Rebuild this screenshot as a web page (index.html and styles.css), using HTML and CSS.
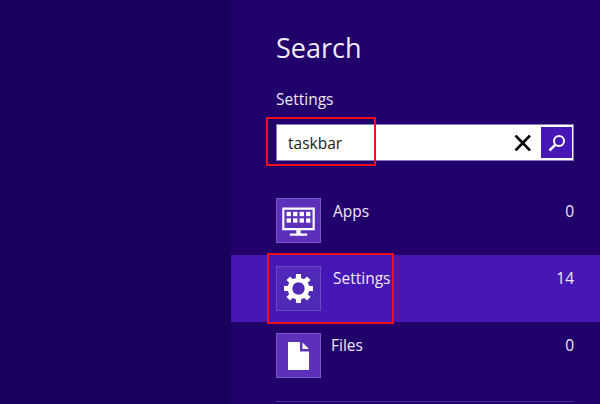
FILE: index.html
```html
<!DOCTYPE html>
<html lang="en">
<head>
<meta charset="utf-8">
<title>Search</title>
<link rel="stylesheet" href="styles.css">
</head>
<body>
<div class="screen">
  <div class="backdrop"></div>
  <main class="pane">
    <header class="head">
      <h1 class="title">Search</h1>
      <div class="scope">Settings</div>
      <div class="searchbox">
        <span class="query">taskbar</span>
        <svg class="clear" width="18" height="16" viewBox="0 0 18 16"><path d="M1.500 0.500 L16 15.500 M16 0.500 L1.500 15.500" stroke="#000" stroke-width="2.6" fill="none"/></svg>
        <span class="go">
          <svg width="20" height="20" viewBox="0 0 20 20"><circle cx="12" cy="8" r="5" stroke="#fff" stroke-width="2" fill="none"/><path d="M8.2 11.8 L2.500 17.500" stroke="#fff" stroke-width="2.6" fill="none"/></svg>
        </span>
      </div>
    </header>
    <ul class="list">
      <li class="row">
        <span class="tile">
          <svg width="39" height="39" viewBox="0 -2 36 36"><path fill="#fff" fill-rule="evenodd" d="M3 4h30v21H20v3h6v2H10v-2h6v-3H3zM5 6v17h26V6z"/><g fill="#fff"><rect x="7" y="8" width="4" height="4"/><rect x="13" y="8" width="4" height="4"/><rect x="19" y="8" width="4" height="4"/><rect x="25" y="8" width="4" height="4"/><rect x="7" y="14" width="4" height="4"/><rect x="13" y="14" width="4" height="4"/><rect x="19" y="14" width="4" height="4"/><rect x="25" y="14" width="4" height="4"/></g></svg>
        </span>
        <span class="label">Apps</span>
        <span class="count">0</span>
      </li>
      <li class="row selected">
        <span class="tile">
          <svg width="33" height="33" viewBox="0 0 32 32"><g fill="#fff"><path fill-rule="evenodd" d="M16 5.5a10.500 10.500 0 1 0 0 21a10.500 10.500 0 1 0 0-21zM16 10a6 6 0 1 1 0 12a6 6 0 1 1 0-12z"/><rect x="13.500" y="2" width="5" height="5"/><rect x="13.500" y="25" width="5" height="5"/><rect x="2" y="13.500" width="5" height="5"/><rect x="25" y="13.500" width="5" height="5"/><rect x="13.500" y="2" width="5" height="5" transform="rotate(45 16 16)"/><rect x="13.500" y="25" width="5" height="5" transform="rotate(45 16 16)"/><rect x="2" y="13.500" width="5" height="5" transform="rotate(45 16 16)"/><rect x="25" y="13.500" width="5" height="5" transform="rotate(45 16 16)"/></g></svg>
        </span>
        <span class="label">Settings</span>
        <span class="count">14</span>
      </li>
      <li class="row">
        <span class="tile">
          <svg width="21" height="28" viewBox="0 0 21 28"><path fill="#fff" d="M0 0h12v9.500h9V28H0z"/><path fill="#fff" d="M14.500 0.500l6.500 6.500h-6.500z"/></svg>
        </span>
        <span class="label">Files</span>
        <span class="count">0</span>
      </li>
    </ul>
    <div class="rule"></div>
  </main>
  <div class="mark mark-query"></div>
  <div class="mark mark-settings"></div>
</div>
</body>
</html>
```
FILE: styles.css
```css
* { box-sizing: border-box; }
html, body { margin: 0; padding: 0; }
body { width: 600px; height: 404px; overflow: hidden; font-family: "Open Sans", "Noto Sans", sans-serif; color: #fff; }
.screen { position: relative; display: flex; width: 600px; height: 404px; background: #22006b; overflow: hidden; }
.backdrop { width: 231px; background: #18005c; }
.pane { flex: 1; display: flex; flex-direction: column; }
.head { padding: 29px 26px 0 45px; }
.title { margin: 0; font-size: 27px; line-height: 37px; font-weight: 400; color: #f0ecf8; }
.scope { margin-top: 23px; font-size: 15.500px; line-height: 20px; color: #eae6f4; }
.searchbox { display: flex; align-items: center; height: 37px; margin-top: 15px; padding: 0 1px 0 11px; background: #fff; border: 1px solid #8a78c0; }
.query { flex: 1; font-size: 15.500px; color: #1a1a1a; }
.clear { margin-right: 9px; }
.go { display: flex; align-items: center; justify-content: center; width: 31px; height: 31px; background: #4617b4; }
.list { list-style: none; margin: 27px 0 0; padding: 0; }
.row { display: flex; align-items: flex-start; height: 67px; padding: 10px 26px 0 45px; }
.selected { background: #4617b4; }
.selected, .selected + .row { padding-top: 11px; }
.tile { display: flex; align-items: center; justify-content: center; width: 45px; height: 45px; background: #5c30b8; border: 1px solid #7a58c6; }
.selected .tile { background: #5029b8; border-color: #6a48c2; }
.label { flex: 1; margin: 1px 0 0 12px; font-size: 15.500px; line-height: 24px; color: #eee9f8; }
.selected .label, .selected + .row .label { margin-top: 0; }
.selected + .row .label { margin-left: 10px; }
.count { margin-top: 1px; font-size: 15.500px; line-height: 24px; color: #eee9f8; }
.selected .count, .selected + .row .count { margin-top: 0; }
.rule { height: 1px; margin: 12px 26px 0 45px; background: #4a2a92; }
.mark { position: absolute; border: 2px solid #f00e1e; }
.mark-query { left: 266px; top: 117px; width: 110px; height: 49px; }
.mark-settings { left: 267px; top: 253px; width: 127px; height: 71px; }
```
